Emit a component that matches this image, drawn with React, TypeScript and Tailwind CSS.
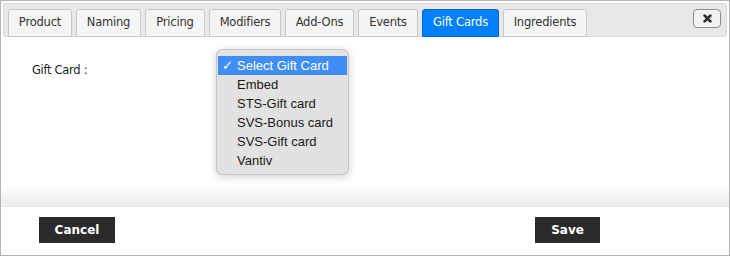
const tabs = [
  { label: 'Product', w: 'w-[64px]', active: false },
  { label: 'Naming', w: 'w-[65px]', active: false },
  { label: 'Pricing', w: 'w-[60px]', active: false },
  { label: 'Modifiers', w: 'w-[72px]', active: false },
  { label: 'Add-Ons', w: 'w-[69px]', active: false },
  { label: 'Events', w: 'w-[60px]', active: false },
  { label: 'Gift Cards', w: 'w-[77px]', active: true },
  { label: 'Ingredients', w: 'w-[84px]', active: false },
];

const options = ['Select Gift Card', 'Embed', 'STS-Gift card', 'SVS-Bonus card', 'SVS-Gift card', 'Vantiv'];

export default function App() {
  return (
    <div className="relative w-[730px] h-[256px] bg-white border border-[#b4b4b4] flex flex-col overflow-hidden font-['DejaVu_Sans',Verdana,sans-serif]">
      {/* tab strip */}
      <div className="mx-[2px] mt-[2px] h-[34px] bg-[#e8e8e8] border border-[#d8d8d8] rounded-[3px] flex items-end pl-[4px] gap-[4px] relative">
        {tabs.map(({ label, w, active }) => (
          <div
            key={label}
            className={`${w} h-[28px] -mb-px flex items-center justify-center rounded-t-[3px] border text-[11.5px] tracking-[-0.2px] ${
              active
                ? 'bg-[#007fff] border-[#0066dd] text-white'
                : 'bg-[#f5f5f5] border-[#c8c8c8] text-[#333]'
            }`}
          >
            {label}
          </div>
        ))}
        <div className="absolute right-[5px] top-[5px] w-[28px] h-[19px] rounded-[4px] border border-[#8c8c9a] bg-[#f2f2f2] flex items-center justify-center">
          <svg width="9" height="9" viewBox="0 0 10 10">
            <path d="M1.8 1.8 L8.2 8.2 M8.2 1.8 L1.8 8.2" stroke="#2a2a2a" strokeWidth="3" strokeLinecap="round" />
          </svg>
        </div>
      </div>

      {/* content */}
      <div className="flex-1 relative">
        <div className="pl-[31px] pt-[25px] text-[11.5px] tracking-[-0.3px] text-[#222]">Gift Card :</div>
      </div>

      {/* footer shadow band */}
      <div className="h-[22px] bg-gradient-to-b from-white to-[#ebebeb]" />

      {/* footer */}
      <div className="h-[48px] bg-white mr-[1px] flex items-start pt-[10px] relative">
        <button className="ml-[38px] w-[76px] h-[26px] bg-[#2b2b2b] text-white text-[12px] font-bold">Cancel</button>
        <button className="ml-[420px] w-[65px] h-[26px] bg-[#2b2b2b] text-white text-[12px] font-bold">Save</button>
      </div>

      {/* open native select menu */}
      <div className="absolute left-[215px] top-[48px] w-[133px] h-[126px] bg-[#e2e2e2] border border-[#c6c6c6] rounded-[6px] shadow-[0_2px_8px_rgba(0,0,0,0.18)] pt-[6px] px-[1px] font-['Liberation_Sans',Arial,sans-serif] text-[13px] text-[#1a1a1a]">
        {options.map((o, i) => (
          <div
            key={o}
            className={`h-[19px] flex items-center ${i === 0 ? 'bg-[#3e8ef5] text-white' : ''}`}
          >
            <span className="w-[19px] pl-[4px] text-[13px]">{i === 0 ? '✓' : ''}</span>
            <span>{o}</span>
          </div>
        ))}
      </div>
    </div>
  );
}
